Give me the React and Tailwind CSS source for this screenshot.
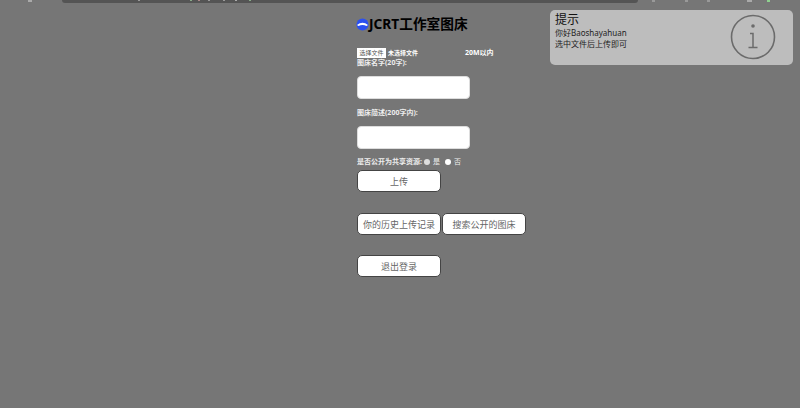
function Btn({ children, className = "" }) {
  return (
    <button className={`h-[22px] w-[84px] rounded-[5px] border border-[#444] bg-white text-[9px] leading-none text-[#666] ${className}`}>
      {children}
    </button>
  );
}

function Logo() {
  return (
    <svg width="13" height="13" viewBox="0 0 13 13" className="shrink-0">
      <circle cx="6.5" cy="6.5" r="6" fill="#2b50f0" />
      <path d="M1 7 Q6.5 2.5 12 7 L10.5 8 Q6.5 6 2.5 8 Z" fill="#fff" />
    </svg>
  );
}

export default function App() {
  return (
    <div className="relative h-[408px] w-[800px] overflow-hidden bg-[#767676] font-['Noto_Sans','Noto_Sans_CJK_SC',sans-serif]">
      <div className="flex h-[4px] items-start">
        <div className="ml-[28px] mt-0 h-[2px] w-[4px] bg-[#aaa]" />
        <div className="ml-[30px] flex h-[3px] w-[576px] items-start rounded-b-[6px] bg-[#545454] pl-[76px]">
          <div className="h-[1px] w-[2px] bg-[#999]" />
          <div className="ml-[50px] h-[1px] w-[2px] bg-[#8a8]" />
          <div className="ml-[6px] h-[1px] w-[2px] bg-[#a88]" />
          <div className="ml-[8px] h-[1px] w-[2px] bg-[#999]" />
          <div className="ml-[13px] h-[1px] w-[2px] bg-[#999]" />
          <div className="ml-[10px] h-[1px] w-[2px] bg-[#aaa]" />
          <div className="ml-[12px] h-[1px] w-[2px] bg-[#8a8]" />
        </div>
        <div className="ml-[14px] h-[2px] w-[3px] bg-[#999]" />
        <div className="ml-[30px] h-[2px] w-[3px] bg-[#999]" />
        <div className="ml-[19px] h-[2px] w-[3px] bg-[#999]" />
        <div className="ml-[37px] h-[2px] w-[5px] bg-[#aaa]" />
        <div className="ml-[15px] h-[2px] w-[3px] bg-[#8fd18f]" />
      </div>

      <div className="ml-[356px] flex w-[180px] flex-col">
        <h1 className="mt-[11px] flex h-[18px] items-center text-[13.7px] font-bold leading-none text-black">
          <Logo />
          <span>JCRT工作室图床</span>
        </h1>

        <div className="ml-[1px] mt-[15px] flex h-[10px] items-center">
          <span className="flex h-[10px] w-[29px] items-center justify-center bg-white text-[6px] text-[#555]">选择文件</span>
          <span className="ml-[2px] text-[6px] font-bold text-white">未选择文件</span>
          <span className="ml-[47px] text-[7px] font-bold text-white">20M以内</span>
        </div>
        <label className="ml-[1px] h-[10px] text-[7px] font-bold leading-[10px] text-[#eee]">图床名字(20字):</label>
        <div className="ml-[1px] mt-[8px] h-[23px] w-[113px] rounded-[4px] border border-[#ddd] bg-white" />

        <label className="ml-[1px] mt-[9px] h-[10px] text-[7px] font-bold leading-[10px] text-[#eee]">图床简述(200字内):</label>
        <div className="ml-[1px] mt-[8px] h-[23px] w-[113px] rounded-[4px] border border-[#ddd] bg-white" />

        <div className="ml-[1px] mt-[8px] flex h-[10px] items-center text-[7px] text-[#eee]">
          <span className="font-bold">是否公开为共享资源:</span>
          <span className="ml-[2px] size-[6px] rounded-full bg-[#ddd]" />
          <span className="ml-[3px]">是</span>
          <span className="ml-[5px] size-[6px] rounded-full bg-white" />
          <span className="ml-[3px]">否</span>
        </div>

        <Btn className="ml-[1px] mt-[3px]">上传</Btn>

        <div className="ml-[1px] mt-[21px] flex">
          <Btn>你的历史上传记录</Btn>
          <Btn className="ml-[1px]">搜索公开的图床</Btn>
        </div>

        <Btn className="ml-[1px] mt-[20px]">退出登录</Btn>
      </div>

      <div className="absolute left-[550px] top-[10px] flex h-[55px] w-[243px] items-start justify-between rounded-[5px] bg-[#bdbdbd] pl-[5px] pr-[17px] pt-[3px] text-[#222]">
        <div>
          <div className="text-[12px] leading-[14px] text-[#111]">提示</div>
          <div className="text-[8px] leading-[11px]">你好Baoshayahuan</div>
          <div className="text-[8px] leading-[11px]">选中文件后上传即可</div>
        </div>
        <svg width="46" height="46" viewBox="0 0 46 46" className="mt-[1px]" fill="none" stroke="#6b6b6b">
          <circle cx="23" cy="23" r="21.5" strokeWidth="1.6" />
          <circle cx="23" cy="12" r="1.8" fill="#6b6b6b" stroke="none" />
          <path d="M20 19.5h3v14M18.5 33.5h9" strokeWidth="1.5" />
        </svg>
      </div>
    </div>
  );
}
